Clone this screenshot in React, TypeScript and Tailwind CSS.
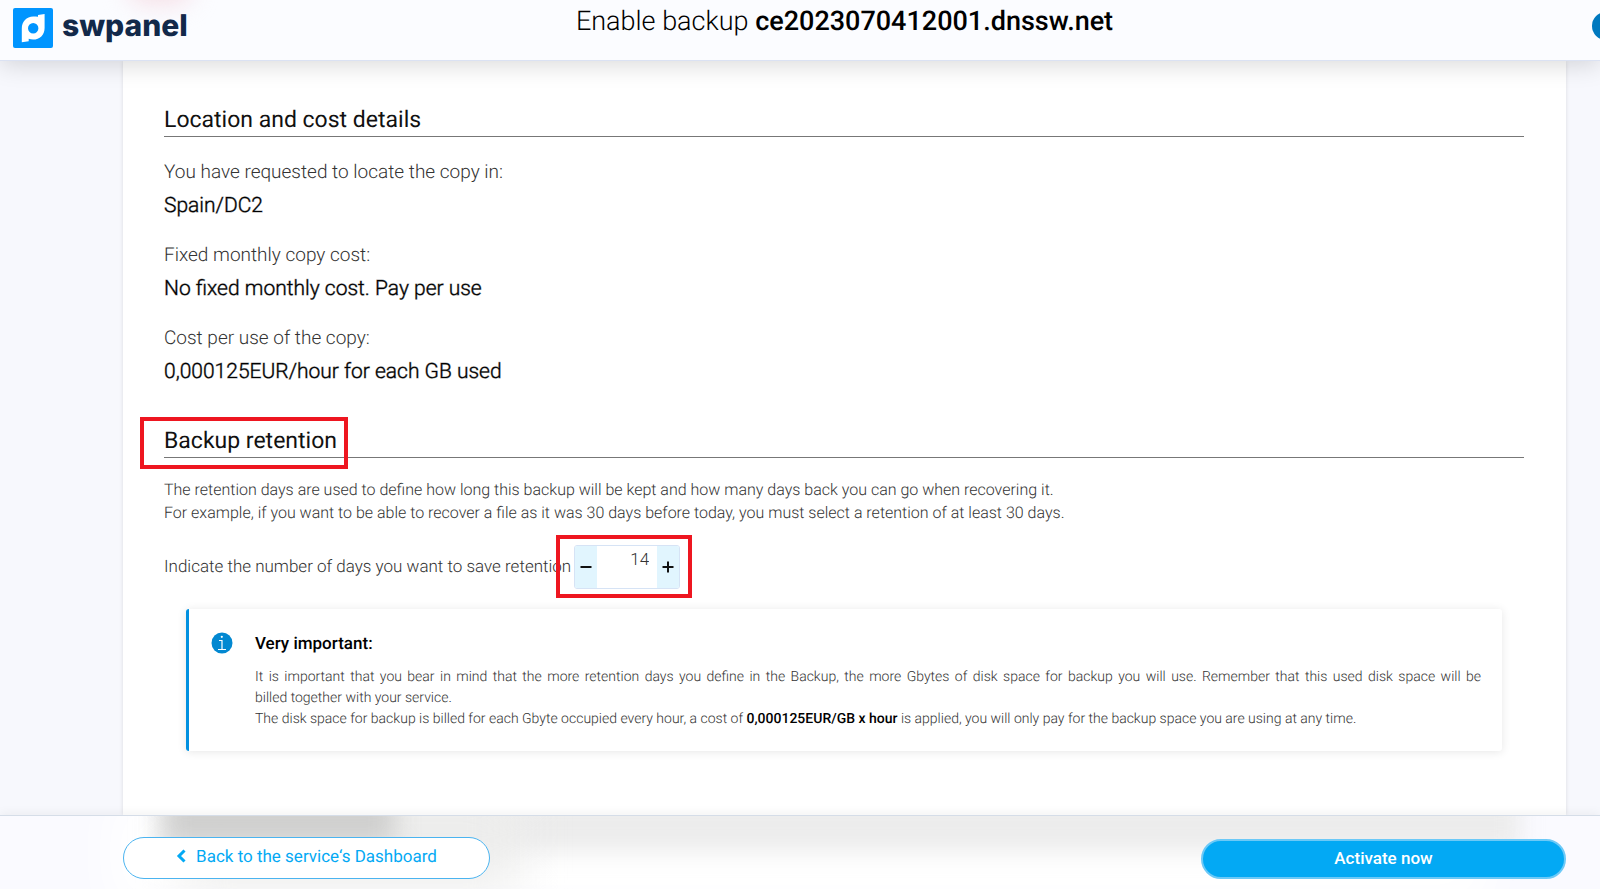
import { useState } from "react";

const details = [
  { label: "You have requested to locate the copy in:", value: "Spain/DC2" },
  { label: "Fixed monthly copy cost:", value: "No fixed monthly cost. Pay per use" },
  { label: "Cost per use of the copy:", value: "0,000125EUR/hour for each GB used" },
];

function Logo() {
  return (
    <a href="#" className="flex w-[189px] shrink-0 items-start gap-[9px] pl-[13px] text-[#12294a]">
      <svg viewBox="0 0 40 40" className="h-10 w-10 shrink-0" aria-hidden="true">
        <rect width="40" height="40" rx="2" fill="#0095ff" />
        <path
          fill="#fff"
          fillRule="evenodd"
          d="M25 8.8V7l6.6-1v14c0 7-4.8 11.6-11.5 11.6-1.600 0-3-.3-4.400-.8v2.500l-6.900 1V20.500C8.800 13.500 13.500 8.500 20.200 8.500c1.700 0 3.400.1 4.800.3ZM20.200 15a5.200 5.200 0 1 0 0 10.400 5.200 5.200 0 0 0 0-10.400Z"
        />
      </svg>
      <span className="font-[Inter,sans-serif] text-[30px] leading-9 font-extrabold">swpanel</span>
    </a>
  );
}

function Header() {
  return (
    <header className="relative z-10 flex h-[61px] shrink-0 items-start overflow-x-clip border-b border-[#dbe2f3] bg-[#fbfcff] shadow-[0_4px_24px_rgba(0,0,0,0.15)]">
      {/* Soft tint behind the logo */}
      <div className="absolute -top-8 left-32 h-9 w-16 rounded-full bg-[#f6dfe6] blur-md" />
      <div className="relative pt-2">
        <Logo />
      </div>
      <h1 className="flex-1 pt-[5px] text-center text-[27px] leading-8 font-light text-black">
        Enable backup <strong className="font-medium">ce2023070412001.dnssw.net</strong>
      </h1>
      <div className="flex w-[100px] shrink-0 justify-end pt-3">
        <button aria-label="Account" className="-mr-5 h-7 w-7 shrink-0 rounded-full bg-[#0079bf]" />
      </div>
    </header>
  );
}

function SectionTitle({ children, marked = false }: { children: string; marked?: boolean }) {
  return (
    <div className="relative border-b border-[#777] pb-[2px]">
      <h2 className="text-[23px] leading-7 font-normal text-[#111]">{children}</h2>
      {marked && <div className="absolute -top-[10px] -left-6 h-[52px] w-[208px] border-4 border-[#ee1620]" />}
    </div>
  );
}

function DaysStepper() {
  const [days, setDays] = useState(14);

  return (
    <div className="relative ml-[3px]">
      <div className="flex h-11 w-[106px] overflow-hidden rounded-[3px] border border-[#d6e3f5]">
        <button
          aria-label="Fewer days"
          onClick={() => setDays((d) => Math.max(1, d - 1))}
          className="flex w-[22px] shrink-0 items-center justify-center bg-[#e1f5fe]"
        >
          <svg viewBox="0 0 12 12" className="h-3 w-3" stroke="#111" strokeWidth="2">
            <path d="M.5 6h11" />
          </svg>
        </button>
        <input
          id="days"
          value={days}
          onChange={(e) => setDays(Number(e.target.value) || 0)}
          className="min-w-0 flex-1 bg-white pr-2 pb-[14px] text-right text-[17px] font-light text-[#333] outline-none"
        />
        <button
          aria-label="More days"
          onClick={() => setDays((d) => d + 1)}
          className="flex w-[22px] shrink-0 items-center justify-center bg-[#e1f5fe]"
        >
          <svg viewBox="0 0 12 12" className="h-3 w-3" stroke="#111" strokeWidth="2">
            <path d="M.5 6h11M6 .5v11" />
          </svg>
        </button>
      </div>
      <div className="pointer-events-none absolute -top-[10px] -left-[18px] h-[63px] w-[136px] border-4 border-[#ee1620]" />
    </div>
  );
}

function InfoCard() {
  return (
    <aside className="mx-[22px] mt-5 flex rounded-[3px] border-l-[3px] border-[#0190e0] bg-white pt-[23px] pr-[21px] pb-[21px] pl-[22px] shadow-[0_1px_10px_rgba(0,0,0,0.1)]">
      <svg viewBox="0 0 22 22" className="h-[22px] w-[22px] shrink-0" aria-hidden="true">
        <circle cx="11" cy="11" r="10.5" fill="#0288d1" />
        <path d="M8 8.5h3v9M7 17.5h8" fill="none" stroke="#fff" strokeWidth="1.2" />
        <circle cx="10.8" cy="4.8" r="1.1" fill="#fff" />
      </svg>
      <div className="ml-[22px] flex-1">
        <h3 className="text-[17px] leading-6 font-medium text-black">Very important:</h3>
        <p className="mt-[11px] text-justify text-sm leading-[21px] font-light text-[#333]">
          It is important that you bear in mind that the more retention days you define in the Backup, the more
          Gbytes of disk space for backup you will use. Remember that this used disk space will be billed&nbsp;together
          with your service.
          <br />
          The disk space for backup is billed for each Gbyte occupied every hour, a cost of{" "}
          <strong className="font-medium text-black">0,000125EUR/GB x hour</strong> is applied, you will only pay for
          the backup space you are using at any time.
        </p>
      </div>
    </aside>
  );
}

function Footer() {
  return (
    <footer className="relative z-10 h-[74px] shrink-0 overflow-hidden border-t border-[#d5dde8] bg-[#fafaff] shadow-[0_-2px_10px_rgba(0,0,0,0.05)]">
      {/* Blurred content showing through the bar */}
      <div className="absolute inset-x-[110px] -top-5 h-28 bg-white blur-xl" />
      <div className="absolute -top-5 right-[80px] left-[160px] h-14 bg-[#ececec] blur-md" />
      <div className="absolute -top-6 left-[180px] h-24 w-[340px] bg-[#ededec] blur-xl" />
      <div className="absolute -top-5 left-[165px] h-12 w-[230px] bg-[#cfcfce] blur-md" />
      <div className="relative flex items-start justify-between pt-[21px] pr-[34px] pl-[123px]">
        <a
          href="#"
          className="flex h-[42px] w-[367px] items-center justify-center rounded-full border border-[#4bb4f0] bg-white text-[17px] text-[#03a9f4]"
        >
          <svg viewBox="0 0 10 14" className="mr-[10px] mb-1 h-[14px] w-[10px]" fill="none" stroke="#03a9f4" strokeWidth="3">
            <path d="M8.5 1.5 3 7l5.5 5.5" />
          </svg>
          Back to the service‘s Dashboard
        </a>
        <button className="mt-[2px] h-10 w-[365px] rounded-full border-2 border-[#6cc9f7] bg-[#03a9f4] text-[17px] font-medium text-white">
          Activate now
        </button>
      </div>
    </footer>
  );
}

export default function App() {
  return (
    <div className="flex min-h-screen flex-col bg-[#f7f8fd] font-[Roboto,sans-serif] [text-rendering:geometricPrecision]">
      <Header />
      <main className="mr-[34px] ml-[123px] flex-1 bg-white pt-[45px] pr-[42px] pb-[60px] pl-[41px] shadow-[0_0_4px_rgba(0,0,0,0.12)]">
        <section>
          <SectionTitle>Location and cost details</SectionTitle>
          <dl className="mt-5">
            {details.map((item) => (
              <div key={item.label} className="mb-[17px]">
                <dt className="text-[19px] leading-[30px] font-light text-[#333]">{item.label}</dt>
                <dd className="pt-[3px] text-[21px] leading-[33px] font-light text-black [-webkit-text-stroke:1px_rgba(0,0,0,0.4)]">
                  {item.value}
                </dd>
              </div>
            ))}
          </dl>
        </section>

        <section className="mt-[38px]">
          <SectionTitle marked>Backup retention</SectionTitle>
          <p className="mt-5 text-base leading-[23px] font-light text-[#333]">
            The retention days are used to define how long this backup will be kept and how many days back you can go
            when recovering it.
            <br />
            For example, if you want to be able to recover a file as it was 30 days before today, you must select a
            retention of at least 30 days.
          </p>
          <div className="mt-[21px] flex items-center">
            <label htmlFor="days" className="text-[17px] leading-6 font-light text-[#333]">
              Indicate the number of days you want to save retention
            </label>
            <DaysStepper />
          </div>
          <InfoCard />
        </section>
      </main>
      <Footer />
    </div>
  );
}
